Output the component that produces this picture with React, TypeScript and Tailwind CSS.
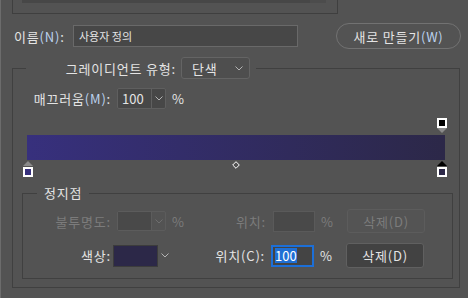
import React from "react";

const Chevron = ({ color = "#b4b4b4" }: { color?: string }) => (
  <svg width="8" height="5" viewBox="0 0 8 5" className="block">
    <path d="M0.5 0.5 L4 4 L7.5 0.5" fill="none" stroke={color} strokeWidth="1" />
  </svg>
);

export default function App() {
  return (
    <div className="w-[468px] h-[298px] bg-[#535353] overflow-hidden border-l border-[#6c6c6c] font-['Noto_Sans_CJK_KR',sans-serif] text-[13px] tracking-[0.8px] leading-none text-[#e4e4e4]">
      {/* top panel remnant */}
      <div className="ml-[11px] w-[326px] h-[14px] border-l border-r border-b border-[#3f3f3f] flex items-start">
        <div className="ml-[9px] w-[288px] h-[3px] bg-[#474747]" />
        <div className="w-[16px] h-[3px] bg-[#4c4c4c]" />
      </div>

      {/* name row */}
      <div className="mt-[9px] h-[26px] flex items-center">
        <div className="ml-[13px] w-[59px]">
          이름<span className="text-[#bcd2ee]">(N)</span>:
        </div>
        <div className="w-[225px] h-[22px] bg-[#474747] border border-[#696969] flex items-center pl-[5px] text-[11px] tracking-[0px]">
          사용자 정의
        </div>
        <div className="ml-[38px] w-[125px] h-[26px] rounded-full border border-[#727272] flex items-center justify-center">
          새로 만들기<span className="text-[#bcd2ee]">(W)</span>
        </div>
      </div>

      {/* gradient type group */}
      <fieldset className="mt-[8px] ml-[11px] w-[448px] h-[231px] border border-[#404040]">
        <legend className="ml-[13px] p-0">
          <div className="flex items-center h-[22px]">
            <div className="w-[151px] text-right pr-[1px]">그레이디언트 유형:</div>
            <div className="ml-[4px] w-[69px] h-[22px] rounded-[3px] bg-[#4e4e4e] border border-[#646464] flex items-center pl-[10px] pr-[6px] justify-between">
              <span>단색</span>
              <Chevron />
            </div>
            <div className="w-[6px]" />
          </div>
        </legend>

        {/* smoothness */}
        <div className="mt-[9px] h-[21px] flex items-center">
          <div className="w-[98px] text-right">
            매끄러움<span className="text-[#bcd2ee]">(M)</span>:
          </div>
          <div className="ml-[6px] w-[49px] h-[21px] rounded-[2px] bg-[#474747] border border-[#5f5f5f] flex items-center tracking-[0px]">
            <div className="w-[33px] pl-[4px]">100</div>
            <div className="w-px h-[19px] bg-[#5f5f5f]" />
            <div className="flex-1 flex justify-center">
              <Chevron />
            </div>
          </div>
          <div className="ml-[6px]">%</div>
        </div>

        {/* gradient bar */}
        <div className="relative h-[76px] pt-[26px]">
          <div className="ml-[14px] w-[418px] h-[25px] bg-[linear-gradient(90deg,#37307d,#2c2848)]" />
          {/* top right opacity stop */}
          <div className="absolute left-[424px] top-[9px] w-[10px] h-[10px] border-2 border-white bg-black" />
          <svg className="absolute left-[424px] top-[19px]" width="10" height="5" viewBox="0 0 10 5">
            <path d="M0 0 H10 L5 5 Z" fill="#8a8a8a" />
          </svg>
          {/* bottom left color stop */}
          <svg className="absolute left-[10px] top-[52px]" width="10" height="5" viewBox="0 0 10 5">
            <path d="M5 0 L10 5 H0 Z" fill="#8a8a8a" />
          </svg>
          <div className="absolute left-[10px] top-[58px] w-[10px] h-[10px] border-2 border-white bg-[#37307d]" />
          {/* bottom right color stop (selected) */}
          <svg className="absolute left-[424px] top-[52px]" width="10" height="5" viewBox="0 0 10 5">
            <path d="M5 0 L10 5 H0 Z" fill="#000" />
          </svg>
          <div className="absolute left-[424px] top-[58px] w-[10px] h-[10px] border-2 border-white bg-[#2c2848]" />
          {/* midpoint diamond */}
          <svg className="absolute left-[219px] top-[52px]" width="8" height="8" viewBox="0 0 8 8">
            <path d="M4 0.7 L7.3 4 L4 7.3 L0.7 4 Z" fill="none" stroke="#fff" strokeWidth="1" />
          </svg>
        </div>

        {/* stops group */}
        <fieldset className="ml-[9px] w-[431px] border border-[#404040] pb-[10px]">
          <legend className="ml-[14px] px-[7px] leading-[16px]">정지점</legend>

          <div className="mt-[8px] h-[24px] flex items-center text-[#7c7c7c]">
            <div className="w-[88px] text-right">불투명도:</div>
            <div className="ml-[6px] w-[49px] h-[20px] rounded-[2px] border border-[#5c5c5c] flex items-center">
              <div className="w-[33px] h-full bg-[#494949]" />
              <div className="w-px h-[18px] bg-[#5c5c5c]" />
              <div className="flex-1 flex justify-center">
                <Chevron color="#6e6e6e" />
              </div>
            </div>
            <div className="ml-[6px] w-[11px]">%</div>
            <div className="w-[83px] text-right">위치:</div>
            <div className="ml-[7px] w-[42px] h-[21px] border border-[#5a5a5a] bg-[#494949]" />
            <div className="ml-[6px] w-[26px]">%</div>
            <div className="w-[78px] h-[24px] rounded-[3px] border border-[#5c5c5c] bg-[#545454] flex items-center justify-center">
              삭제(D)
            </div>
          </div>

          <div className="mt-[10px] h-[25px] flex items-center">
            <div className="w-[88px] text-right">색상:</div>
            <div className="ml-[2px] w-[45px] h-[22px] bg-[#2c2848] border border-[#3c3c3c]" />
            <div className="ml-[2px] w-[10px] flex justify-center">
              <Chevron />
            </div>
            <div className="w-[95px] text-right">위치(C):</div>
            <div className="ml-[6px] w-[43px] h-[22px] border-2 border-[#1c6fd8] bg-[#444444] flex items-center pl-[2px] tracking-[0px]">
              <span className="bg-[#1f6fd4] text-white leading-[15px]">100</span>
            </div>
            <div className="ml-[6px] w-[26px]">%</div>
            <div className="w-[78px] h-[25px] rounded-[3px] border border-[#606060] bg-[#424242] flex items-center justify-center">
              삭제(D)
            </div>
          </div>
        </fieldset>
      </fieldset>
    </div>
  );
}
